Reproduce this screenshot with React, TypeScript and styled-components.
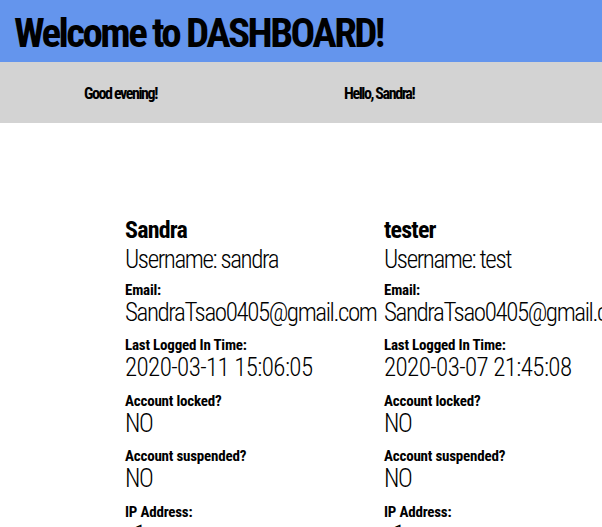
import React from "react";
import styled, { createGlobalStyle } from "styled-components";

const GlobalStyle = createGlobalStyle`
  html, body {
    margin: 0;
    padding: 0;
    background: #ffffff;
    overflow-x: hidden;
  }
  body {
    font-family: "Roboto Condensed", "Roboto", "Liberation Sans", sans-serif;
    font-stretch: 75%;
    color: #000000;
  }
`;

const Page = styled.div`
  display: flex;
  flex-direction: column;
  width: 602px;
`;

const TitleBar = styled.header`
  height: 62px;
  box-sizing: border-box;
  padding: 4px 0 0 14px;
  background: #6495ed;
`;

const Title = styled.h1`
  margin: 0;
  font-size: 41px;
  line-height: 58px;
  font-weight: 700;
  letter-spacing: -2.6px;
  white-space: nowrap;
`;

const GreetingBar = styled.div`
  height: 61px;
  box-sizing: border-box;
  padding: 2px 0 0 84px;
  background: #d3d3d3;
  display: grid;
  grid-template-columns: 260px 260px;
`;

const Greeting = styled.div`
  font-size: 16px;
  line-height: 59px;
  font-weight: 700;
  letter-spacing: -1.4px;
  white-space: nowrap;
`;

const Users = styled.main`
  display: grid;
  grid-template-columns: 259px 259px;
  padding: 93px 0 0 125px;
`;

const Card = styled.section`
  display: flex;
  flex-direction: column;
  min-width: 0;
`;

const Name = styled.h2`
  margin: 0;
  font-size: 24px;
  line-height: 28px;
  font-weight: 700;
  letter-spacing: -0.8px;
`;

const Username = styled.div`
  margin-top: 1.5px;
  font-size: 25px;
  line-height: 28px;
  font-weight: 300;
  letter-spacing: -1.4px;
  white-space: nowrap;
`;

const Label = styled.div<{ $first?: boolean }>`
  margin-top: ${(p) => (p.$first ? "7px" : "9.5px")};
  font-size: 15px;
  line-height: 18px;
  font-weight: 700;
  letter-spacing: -0.2px;
  white-space: nowrap;
`;

const Value = styled.div<{ $numeric?: boolean }>`
  font-size: 25px;
  line-height: 28px;
  font-weight: 300;
  letter-spacing: ${(p) => (p.$numeric ? "-0.6px" : "-1.4px")};
  white-space: nowrap;
`;

type User = {
  name: string;
  username: string;
  email: string;
  lastLogin: string;
  locked: string;
  suspended: string;
  ip: string;
};

const users: User[] = [
  {
    name: "Sandra",
    username: "sandra",
    email: "SandraTsao0405@gmail.com",
    lastLogin: "2020-03-11 15:06:05",
    locked: "NO",
    suspended: "NO",
    ip: "::1",
  },
  {
    name: "tester",
    username: "test",
    email: "SandraTsao0405@gmail.com",
    lastLogin: "2020-03-07 21:45:08",
    locked: "NO",
    suspended: "NO",
    ip: "::1",
  },
];

function UserCard({ user }: { user: User }) {
  return (
    <Card>
      <Name>{user.name}</Name>
      <Username>Username: {user.username}</Username>
      <Label $first>Email:</Label>
      <Value>{user.email}</Value>
      <Label>Last Logged In Time:</Label>
      <Value $numeric>{user.lastLogin}</Value>
      <Label>Account locked?</Label>
      <Value>{user.locked}</Value>
      <Label>Account suspended?</Label>
      <Value>{user.suspended}</Value>
      <Label>IP Address:</Label>
      <Value $numeric>{user.ip}</Value>
    </Card>
  );
}

export default function App() {
  return (
    <Page>
      <GlobalStyle />
      <TitleBar>
        <Title>Welcome to DASHBOARD!</Title>
      </TitleBar>
      <GreetingBar>
        <Greeting>Good evening!</Greeting>
        <Greeting>Hello, Sandra!</Greeting>
      </GreetingBar>
      <Users>
        {users.map((u) => (
          <UserCard key={u.name} user={u} />
        ))}
      </Users>
    </Page>
  );
}
